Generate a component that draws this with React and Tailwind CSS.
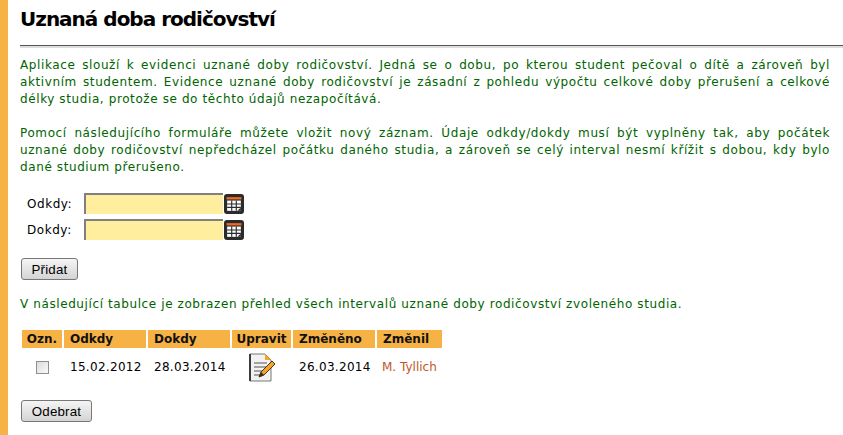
import React from 'react';

const CalendarIcon = () => (
  <button type="button" className="w-5 h-5 ml-px rounded-[3px] bg-[#2b2b2b] flex items-center justify-center shrink-0">
    <svg width="16" height="16" viewBox="0 0 14 14">
      <rect x="0.5" y="1" width="13" height="2" fill="#f26b21" />
      <rect x="1" y="4" width="12" height="9" fill="#fff" />
      <path d="M1 7h12M1 10h12M5 4v9M9 4v9" stroke="#2b2b2b" strokeWidth="1" />
      <path d="M10 13l3-3v3z" fill="#2b2b2b" />
    </svg>
  </button>
);

const EditIcon = () => (
  <svg width="28" height="29" viewBox="0 0 28 29" className="block mx-auto">
    <path d="M2 1h15l6 6v21H2z" fill="#f2f2f2" stroke="#777" strokeWidth="1" />
    <path d="M1 1h2v27H1z" fill="#3c3c3c" />
    <path d="M17 1l6 6h-6z" fill="#f5a623" />
    <path d="M6 10h13M6 14h12M6 18h8M6 22h6" stroke="#a3a3a3" strokeWidth="2" />
    <path d="M11 24l2-5L24 8l3 3-11 11z" fill="#f2a52b" stroke="#4a3413" strokeWidth="1" />
    <path d="M11 24l2-5 3 3z" fill="#2e2e2e" />
  </svg>
);

const DateRow = ({ label }) => (
  <div className="flex items-center h-[21px]">
    <label className="w-[64px] pl-[7px] pt-[2px] text-black tracking-[0.55px]">{label}</label>
    <input className="w-[139px] h-[21px] bg-[#ffee9e] border-t-2 border-l-2 border-[#808080] outline-none" />
    <CalendarIcon />
  </div>
);

const GrayButton = ({ children, width }) => (
  <button
    type="button"
    className={`${width} h-[22px] block rounded-[3px] border border-[#777] bg-gradient-to-b from-[#f5f5f5] to-[#d4d4d4] text-black text-[13.33px] tracking-[0.2px] font-['Liberation_Sans',sans-serif]`}
  >
    {children}
  </button>
);

const headers = [
  { label: 'Ozn.', width: 'w-10', align: 'text-center' },
  { label: 'Odkdy', width: 'w-[82px]', align: 'text-left pl-[6px]' },
  { label: 'Dokdy', width: 'w-[82px]', align: 'text-left pl-[6px]' },
  { label: 'Upravit', width: 'w-[59px]', align: 'text-center' },
  { label: 'Změněno', width: 'w-[82px]', align: 'text-left pl-[6px]' },
  { label: 'Změnil', width: 'w-[65px]', align: 'text-left pl-[6px]' },
];

export default function App() {
  return (
    <div className="w-[843px] h-[435px] overflow-hidden flex bg-white text-[12px] leading-[17px] font-['DejaVu_Sans',Verdana,sans-serif]">
      <div className="w-2 bg-[#f7b245] shrink-0" />
      <div className="flex-1 pl-3">
        <h1 className="text-[20px] tracking-[-1px] leading-6 font-bold text-black pt-[7px]">Uznaná doba rodičovství</h1>
        <div className="mt-[14px] border-t border-[#555] border-b-2 border-b-[#ddd] h-[3px]" />

        <div className="mt-[9px] w-[810px] text-[#006400] text-justify tracking-[0.6px]">
          <p>
            Aplikace slouží k evidenci uznané doby rodičovství. Jedná se o dobu, po kterou student pečoval o dítě a zároveň byl aktivním studentem. Evidence uznané doby rodičovství je zásadní z pohledu výpočtu celkové doby přerušení a celkové délky studia, protože se do těchto údajů nezapočítává.
          </p>
          <p className="mt-[17px]">
            Pomocí následujícího formuláře můžete vložit nový záznam. Údaje odkdy/dokdy musí být vyplněny tak, aby počátek uznané doby rodičovství nepředcházel počátku daného studia, a zároveň se celý interval nesmí křížit s dobou, kdy bylo dané studium přerušeno.
          </p>
        </div>

        <div className="mt-[17px] flex flex-col gap-[5px]">
          <DateRow label="Odkdy:" />
          <DateRow label="Dokdy:" />
        </div>

        <div className="mt-[18px] pl-px">
          <GrayButton width="w-[57px]">Přidat</GrayButton>
        </div>

        <p className="mt-[16px] text-[#006400] tracking-[0.6px]">
          V následující tabulce je zobrazen přehled všech intervalů uznané doby rodičovství zvoleného studia.
        </p>

        <table className="mt-[17px] border-separate border-spacing-x-[2px] border-spacing-y-0 table-fixed">
          <thead>
            <tr>
              {headers.map((h) => (
                <th key={h.label} className={`${h.width} ${h.align} h-[18px] p-0 pt-px bg-[#f7b245] font-bold text-[#111]`}>
                  {h.label}
                </th>
              ))}
            </tr>
          </thead>
          <tbody>
            <tr className="h-[38px] text-black tracking-[0.3px]">
              <td className="p-0 text-center">
                <input type="checkbox" className="appearance-none block mx-auto w-[13px] h-[13px] border border-[#8e8f8f] bg-gradient-to-br from-[#dcdcdc] to-[#fafafa]" />
              </td>
              <td className="p-0 pl-[6px] pt-px">15.02.2012</td>
              <td className="p-0 pl-[6px] pt-px">28.03.2014</td>
              <td className="p-0"><EditIcon /></td>
              <td className="p-0 pl-[6px] pt-px">26.03.2014</td>
              <td className="p-0 pl-[5px] pt-px text-[#c0562a] tracking-normal">M. Tyllich</td>
            </tr>
          </tbody>
        </table>

        <div className="mt-[14px] pl-px">
          <GrayButton width="w-[71px]">Odebrat</GrayButton>
        </div>
      </div>
    </div>
  );
}
